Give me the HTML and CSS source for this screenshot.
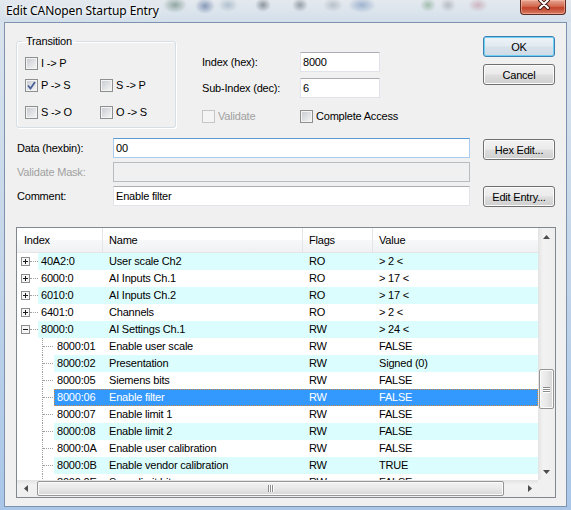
FILE: index.html
```html
<!DOCTYPE html>
<html>
<head>
<meta charset="UTF-8">
<title>Edit CANopen Startup Entry</title>
<link rel="stylesheet" href="styles.css">
</head>
<body>
<div class="window">
    <div class="titlebar">
        <span class="title">Edit CANopen Startup Entry</span>
        <a class="close">
            <svg width="46" height="15" viewBox="0 0 46 15"><path d="M20 1L28 9M28 1L20 9" stroke="#4a1e16" stroke-width="4" stroke-linecap="round"/><path d="M20 1L28 9M28 1L20 9" stroke="#fff" stroke-width="2" stroke-linecap="round"/></svg>
        </a>
    </div>
    <div class="client">
        <div class="top">
            <fieldset class="group">
                <legend>Transition</legend>
                <div class="cbrow first">
                    <span class="cb"><i class="box"></i>I -&gt; P</span>
                </div>
                <div class="cbrow">
                    <span class="cb"><i class="box"><svg width="11" height="11" viewBox="0 0 11 11"><path d="M2 5.5L4.5 8.5L9 2" fill="none" stroke="#4a5f97" stroke-width="1.8"/></svg></i>P -&gt; S</span>
                    <span class="cb"><i class="box"></i>S -&gt; P</span>
                </div>
                <div class="cbrow last">
                    <span class="cb"><i class="box"></i>S -&gt; O</span>
                    <span class="cb"><i class="box"></i>O -&gt; S</span>
                </div>
            </fieldset>
            <div class="fields">
                <div class="frow"><span class="flabel">Index (hex):</span><input class="edit small" type="text" value="8000"></div>
                <div class="frow gap"><span class="flabel">Sub-Index (dec):</span><input class="edit small" type="text" value="6"></div>
                <div class="frow checks">
                    <span class="cb wide disabled"><i class="box"></i>Validate</span>
                    <span class="cb"><i class="box"></i>Complete Access</span>
                </div>
            </div>
            <div class="buttons">
                <button class="btn default">OK</button>
                <button class="btn">Cancel</button>
            </div>
        </div>

        <div class="data">
            <div class="datafields">
                <div class="drow"><span class="dlabel">Data (hexbin):</span><input class="edit long focus" type="text" value="00"></div>
                <div class="drow"><span class="dlabel grey">Validate Mask:</span><input class="edit long" type="text" value="" disabled></div>
                <div class="drow"><span class="dlabel">Comment:</span><input class="edit long" type="text" value="Enable filter"></div>
            </div>
            <div class="databtns">
                <button class="btn">Hex Edit...</button>
                <button class="btn lower">Edit Entry...</button>
            </div>
        </div>

        <div class="list">
            <div class="list-main">
                <div class="view">
                    <div class="head">
                        <div class="hcell h-index">Index</div>
                        <div class="hcell h-name">Name</div>
                        <div class="hcell h-flags">Flags</div>
                        <div class="hcell h-value">Value</div>
                    </div>
                    <div class="rows">
                        <div class="row">
                            <div class="tree"><svg class="exp" width="9" height="9" viewBox="0 0 9 9"><rect x="0.5" y="0.5" width="8" height="8" fill="#f6f6f6" stroke="#8c8c8c"/><path d="M2 4.5h5M4.5 2v5" stroke="#1a1a1a"/></svg><i class="twig"></i></div>
                            <div class="band alt"><span class="c-idx">40A2:0</span><span class="c-name">User scale Ch2</span><span class="c-flags">RO</span><span class="c-val">&gt; 2 &lt;</span></div>
                        </div>
                        <div class="row">
                            <div class="tree"><svg class="exp" width="9" height="9" viewBox="0 0 9 9"><rect x="0.5" y="0.5" width="8" height="8" fill="#f6f6f6" stroke="#8c8c8c"/><path d="M2 4.5h5M4.5 2v5" stroke="#1a1a1a"/></svg><i class="twig"></i></div>
                            <div class="band"><span class="c-idx">6000:0</span><span class="c-name">AI Inputs Ch.1</span><span class="c-flags">RO</span><span class="c-val">&gt; 17 &lt;</span></div>
                        </div>
                        <div class="row">
                            <div class="tree"><svg class="exp" width="9" height="9" viewBox="0 0 9 9"><rect x="0.5" y="0.5" width="8" height="8" fill="#f6f6f6" stroke="#8c8c8c"/><path d="M2 4.5h5M4.5 2v5" stroke="#1a1a1a"/></svg><i class="twig"></i></div>
                            <div class="band alt"><span class="c-idx">6010:0</span><span class="c-name">AI Inputs Ch.2</span><span class="c-flags">RO</span><span class="c-val">&gt; 17 &lt;</span></div>
                        </div>
                        <div class="row">
                            <div class="tree"><svg class="exp" width="9" height="9" viewBox="0 0 9 9"><rect x="0.5" y="0.5" width="8" height="8" fill="#f6f6f6" stroke="#8c8c8c"/><path d="M2 4.5h5M4.5 2v5" stroke="#1a1a1a"/></svg><i class="twig"></i></div>
                            <div class="band"><span class="c-idx">6401:0</span><span class="c-name">Channels</span><span class="c-flags">RO</span><span class="c-val">&gt; 2 &lt;</span></div>
                        </div>
                        <div class="row">
                            <div class="tree"><svg class="exp" width="9" height="9" viewBox="0 0 9 9"><rect x="0.5" y="0.5" width="8" height="8" fill="#f6f6f6" stroke="#8c8c8c"/><path d="M2 4.5h5" stroke="#1a1a1a"/></svg><i class="twig"></i></div>
                            <div class="band alt"><span class="c-idx">8000:0</span><span class="c-name">AI Settings Ch.1</span><span class="c-flags">RW</span><span class="c-val">&gt; 24 &lt;</span></div>
                        </div>
                        <div class="row child">
                            <div class="tree"><i class="stem"><i class="twig"></i></i></div>
                            <div class="band"><span class="c-idx">8000:01</span><span class="c-name">Enable user scale</span><span class="c-flags">RW</span><span class="c-val">FALSE</span></div>
                        </div>
                        <div class="row child">
                            <div class="tree"><i class="stem"><i class="twig"></i></i></div>
                            <div class="band alt"><span class="c-idx">8000:02</span><span class="c-name">Presentation</span><span class="c-flags">RW</span><span class="c-val">Signed (0)</span></div>
                        </div>
                        <div class="row child">
                            <div class="tree"><i class="stem"><i class="twig"></i></i></div>
                            <div class="band"><span class="c-idx">8000:05</span><span class="c-name">Siemens bits</span><span class="c-flags">RW</span><span class="c-val">FALSE</span></div>
                        </div>
                        <div class="row child">
                            <div class="tree"><i class="stem"><i class="twig"></i></i></div>
                            <div class="band selected"><span class="c-idx">8000:06</span><span class="c-name">Enable filter</span><span class="c-flags">RW</span><span class="c-val">FALSE</span></div>
                        </div>
                        <div class="row child">
                            <div class="tree"><i class="stem"><i class="twig"></i></i></div>
                            <div class="band"><span class="c-idx">8000:07</span><span class="c-name">Enable limit 1</span><span class="c-flags">RW</span><span class="c-val">FALSE</span></div>
                        </div>
                        <div class="row child">
                            <div class="tree"><i class="stem"><i class="twig"></i></i></div>
                            <div class="band alt"><span class="c-idx">8000:08</span><span class="c-name">Enable limit 2</span><span class="c-flags">RW</span><span class="c-val">FALSE</span></div>
                        </div>
                        <div class="row child">
                            <div class="tree"><i class="stem"><i class="twig"></i></i></div>
                            <div class="band"><span class="c-idx">8000:0A</span><span class="c-name">Enable user calibration</span><span class="c-flags">RW</span><span class="c-val">FALSE</span></div>
                        </div>
                        <div class="row child">
                            <div class="tree"><i class="stem"><i class="twig"></i></i></div>
                            <div class="band alt"><span class="c-idx">8000:0B</span><span class="c-name">Enable vendor calibration</span><span class="c-flags">RW</span><span class="c-val">TRUE</span></div>
                        </div>
                        <div class="row child">
                            <div class="tree"><i class="stem"><i class="twig"></i></i></div>
                            <div class="band"><span class="c-idx">8000:0E</span><span class="c-name">Swap limit bits</span><span class="c-flags">RW</span><span class="c-val">FALSE</span></div>
                        </div>
                    </div>
                </div>
                <div class="vbar">
                    <div class="sbtn"><svg width="7" height="4" viewBox="0 0 7 4"><path d="M0 4L3.5 0L7 4Z" fill="#4d4d4d"/></svg></div>
                    <div class="vtrack"><div class="vthumb"><i></i><i></i><i></i></div></div>
                    <div class="sbtn"><svg width="7" height="4" viewBox="0 0 7 4"><path d="M0 0L3.5 4L7 0Z" fill="#4d4d4d"/></svg></div>
                </div>
            </div>
            <div class="hbar">
                <div class="sbtn"><svg width="4" height="7" viewBox="0 0 4 7"><path d="M4 0L0 3.5L4 7Z" fill="#4d4d4d"/></svg></div>
                <div class="htrack"><div class="hthumb"><i></i><i></i><i></i></div></div>
                <div class="sbtn"><svg width="4" height="7" viewBox="0 0 4 7"><path d="M0 0L4 3.5L0 7Z" fill="#4d4d4d"/></svg></div>
                <div class="corner"></div>
            </div>
        </div>
    </div>
</div>
</body>
</html>
```
FILE: styles.css
```css
* {
    box-sizing: border-box;
}

html, body {
    margin: 0;
    padding: 0;
}

body {
    width: 571px;
    height: 510px;
    overflow: hidden;
    font-family: "Liberation Sans", Arial, sans-serif;
    font-size: 11px;
    letter-spacing: -0.2px;
    color: #000;
}

.window {
    height: 510px;
    display: flex;
    flex-direction: column;
    background: linear-gradient(#dbe4ee, #c9d9ea 40%, #a9c6e9);
}

/* glass title bar */
.titlebar {
    height: 22px;
    display: flex;
    justify-content: space-between;
    align-items: flex-start;
    background:
        radial-gradient(ellipse 12px 8px at 175px 5px, rgba(50, 90, 70, .45), transparent),
        radial-gradient(ellipse 10px 8px at 205px 6px, rgba(30, 60, 120, .45), transparent),
        radial-gradient(ellipse 10px 7px at 228px 5px, rgba(90, 120, 150, .35), transparent),
        radial-gradient(ellipse 8px 7px at 263px 5px, rgba(40, 50, 60, .45), transparent),
        radial-gradient(ellipse 8px 7px at 300px 5px, rgba(40, 50, 60, .4), transparent),
        radial-gradient(ellipse 10px 7px at 333px 5px, rgba(110, 120, 130, .35), transparent),
        radial-gradient(ellipse 14px 8px at 362px 5px, rgba(60, 100, 160, .4), transparent),
        radial-gradient(ellipse 8px 7px at 428px 5px, rgba(70, 130, 80, .4), transparent),
        radial-gradient(ellipse 8px 7px at 448px 5px, rgba(110, 110, 120, .35), transparent),
        radial-gradient(ellipse 10px 7px at 478px 5px, rgba(170, 90, 110, .35), transparent),
        linear-gradient(#e4e9ee, #d3dfeb);
}

.title {
    padding: 3px 0 0 6px;
    font-family: "Noto Sans", "Open Sans", sans-serif;
    font-size: 12px;
    letter-spacing: -0.1px;
    line-height: 16px;
    text-shadow: 0 0 6px #fff, 0 0 3px #fff;
}

.close {
    display: block;
    width: 46px;
    height: 15px;
    margin-right: 5px;
    border: 1px solid #5f2b22;
    border-top: none;
    border-radius: 0 0 4px 4px;
    background: linear-gradient(#e6a693, #d3694f 45%, #c2432a 55%, #d87a62);
    box-shadow: inset 0 0 0 1px rgba(255, 200, 180, .5);
}

.close svg {
    display: block;
    margin: -1px 0 0 -1px;
}

.client {
    flex: 1;
    margin: 0 4px 3px 4px;
    border: 1px solid #7d93ad;
    background: #f0f0f0;
}

/* top part */
.top {
    display: flex;
    align-items: flex-start;
    height: 105px;
}

.group {
    width: 160px;
    height: 93px;
    margin: 12px 0 0 11px;
    padding: 0 0 0 5px;
    border: 1px solid #d5dfe5;
    border-radius: 3px;
    box-shadow: inset 1px 1px 0 #fff, 1px 1px 0 #fff;
}

.group legend {
    padding: 0 4px;
    line-height: 13px;
}

.cbrow {
    display: flex;
    height: 13px;
    margin: 9px 0 0 3px;
}

.cbrow.last {
    margin-top: 14px;
}

.cb {
    display: flex;
    align-items: center;
    height: 13px;
    line-height: 13px;
}

.cbrow .cb:first-child {
    width: 75px;
}

.box {
    display: block;
    width: 13px;
    height: 13px;
    margin-right: 3px;
    border: 1px solid #8e8f8f;
    background: linear-gradient(135deg, #c5c9cf, #f7f7f7);
    box-shadow: inset 0 0 0 1px #f4f4f4;
}

.box svg {
    display: block;
}

.cb.disabled {
    color: #a0a0a0;
}

.cb.disabled .box {
    border-color: #c6c6c6;
    background: #f4f4f4;
}

.fields {
    margin: 29px 0 0 26px;
}

.frow {
    display: flex;
    align-items: center;
    height: 20px;
}

.frow.gap {
    margin-top: 6px;
}

.frow.checks {
    height: 13px;
    margin-top: 12px;
}

.flabel {
    width: 98px;
}

.cb.wide {
    width: 98px;
}

.edit {
    height: 20px;
    margin: 0;
    padding: 0 2px;
    border: 1px solid #e2e3ea;
    border-top-color: #abadb3;
    font-family: "Liberation Sans", Arial, sans-serif;
    font-size: 11px;
    letter-spacing: -0.2px;
    color: #000;
    background: #fff;
    outline: none;
}

.edit.small {
    width: 80px;
}

.edit.long {
    width: 357px;
}

.edit.focus {
    border-color: #a9cbee;
    border-top-color: #5a9ad6;
}

.edit:disabled {
    background: #f0f0f0;
    border-color: #b7bcc0;
}

.buttons {
    display: flex;
    flex-direction: column;
    gap: 7px;
    margin: 13px 11px 0 auto;
}

.btn {
    width: 72px;
    height: 21px;
    margin: 0;
    padding: 0;
    border: 1px solid #707070;
    border-radius: 3px;
    background: linear-gradient(#f2f2f2, #ebebeb 45%, #dddddd 55%, #cfcfcf);
    box-shadow: inset 0 0 0 1px #fbfbfb;
    font-family: "Liberation Sans", Arial, sans-serif;
    font-size: 11px;
    letter-spacing: -0.2px;
    color: #000;
}

.btn.default {
    border-color: #3c7fb1;
    background: linear-gradient(#eef3f7, #e3ebf1 45%, #d6e1ea 55%, #cfdbe5);
    box-shadow: inset 0 0 0 1px #6fd0f5;
}

/* data part */
.data {
    display: flex;
    align-items: flex-start;
    margin-top: 10px;
}

.datafields {
    display: flex;
    flex-direction: column;
    gap: 4px;
    margin-left: 12px;
}

.drow {
    display: flex;
    align-items: center;
}

.dlabel {
    width: 96px;
}

.grey {
    color: #a0a0a0;
}

.databtns {
    display: flex;
    flex-direction: column;
    margin: 1px 11px 0 auto;
}

.btn.lower {
    margin-top: 26px;
}

/* list view */
.list {
    width: 540px;
    height: 271px;
    margin: 20px 0 0 11px;
    border: 1px solid #828790;
    background: #fff;
}

.list-main {
    display: flex;
    height: 252px;
}

.view {
    width: 521px;
    overflow: hidden;
}

.head {
    display: flex;
    height: 25px;
    border-bottom: 1px solid #e5e5e5;
    background: linear-gradient(#fff 50%, #f7f8f9 51%, #f0f1f3);
}

.hcell {
    padding-left: 6px;
    line-height: 24px;
    border-right: 1px solid #e3e5e8;
}

.h-index {
    width: 86px;
    padding-left: 7px;
}

.h-name {
    width: 200px;
}

.h-flags {
    width: 70px;
}

.h-value {
    flex: 1;
    border-right: none;
}

.rows {
    height: 227px;
    overflow: hidden;
}

.row {
    display: flex;
    height: 17px;
    line-height: 17px;
}

.tree {
    display: flex;
    align-items: flex-start;
    width: 21px;
    padding-left: 4px;
}

.exp {
    display: block;
    margin-top: 4px;
    shape-rendering: crispEdges;
}

.twig {
    display: block;
    width: 8px;
    margin-top: 8px;
    border-top: 1px dotted #a0a0a0;
}

.child .tree {
    width: 37px;
    padding-left: 25px;
}

.stem {
    display: block;
    width: 11px;
    height: 17px;
    border-left: 1px dotted #a0a0a0;
}

.stem .twig {
    width: 10px;
}

.band {
    display: flex;
    flex: 1;
    white-space: nowrap;
}

.band.alt {
    background: #dcfdfd;
}

.band.selected {
    background: #3399ff;
    color: #fff;
    outline: 1px dotted #c98a44;
    outline-offset: -1px;
}

.c-idx {
    width: 71px;
    padding-left: 3px;
}

.child .c-idx {
    width: 55px;
}

.c-name {
    width: 200px;
}

.c-flags {
    width: 70px;
}

.c-val {
    flex: 1;
}

/* scrollbars */
.vbar {
    display: flex;
    flex-direction: column;
    width: 17px;
    background: linear-gradient(90deg, #e3e3e3, #f2f2f2 30%, #eeeeee);
}

.sbtn {
    display: flex;
    align-items: center;
    justify-content: center;
    width: 17px;
    height: 17px;
}

.vtrack {
    flex: 1;
    padding: 124px 1px 0 1px;
}

.vthumb {
    display: flex;
    flex-direction: column;
    align-items: center;
    justify-content: center;
    gap: 1px;
    height: 40px;
    border: 1px solid #959595;
    border-radius: 2px;
    background: linear-gradient(90deg, #f3f3f3, #e8e8e8 50%, #d6d6d6);
    box-shadow: inset 0 0 0 1px #fbfbfb;
}

.vthumb i {
    display: block;
    width: 7px;
    height: 1px;
    background: #8c8c8c;
    box-shadow: 0 1px 0 #fff;
}

.hbar {
    display: flex;
    height: 17px;
    background: linear-gradient(#e3e3e3, #f2f2f2 30%, #eeeeee);
}

.htrack {
    flex: 1;
    padding: 1px 0 1px 3px;
}

.hthumb {
    display: flex;
    align-items: center;
    justify-content: center;
    gap: 1px;
    width: 467px;
    height: 15px;
    border: 1px solid #959595;
    border-radius: 2px;
    background: linear-gradient(#f3f3f3, #e8e8e8 50%, #d6d6d6);
    box-shadow: inset 0 0 0 1px #fbfbfb;
}

.hthumb i {
    display: block;
    width: 1px;
    height: 7px;
    background: #8c8c8c;
    box-shadow: 1px 0 0 #fff;
}

.corner {
    width: 17px;
    background: #f0f0f0;
}
```
